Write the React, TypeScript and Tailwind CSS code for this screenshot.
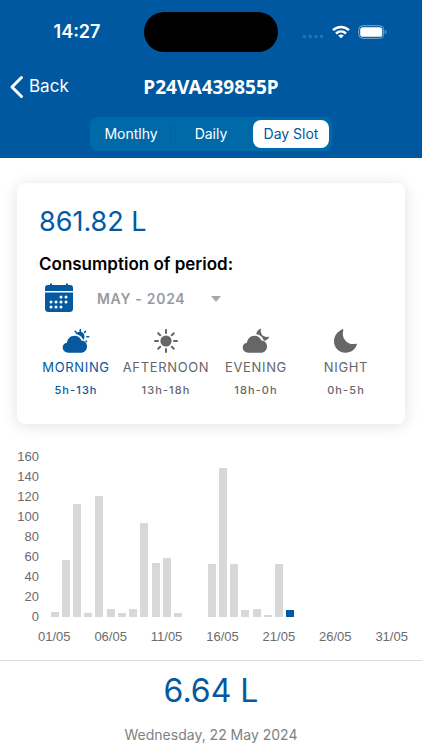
import { ReactNode, useState } from 'react';

const days = [
  5.5, 57, 113.5, 4.5, 121, 8.5, 4, 8.5, 94, 54.5, 59, 4, 0, 0, 53, 149.5, 53, 7,
  8.5, 2, 53, 6.64, 0, 0, 0, 0, 0, 0, 0, 0, 0,
];

const yTicks = [160, 140, 120, 100, 80, 60, 40, 20, 0];
const xTicks = ['01/05', '06/05', '11/05', '16/05', '21/05', '26/05', '31/05'];
const views = ['Montlhy', 'Daily', 'Day Slot'];

const cloud =
  'M6.300 25.700C2.900 25.700.7 23.400.7 20.600c0-2.600 1.700-4.500 4.200-4.900.6-4.200 3.700-7 7.500-7 3.300 0 5.900 1.900 7 4.900 3.300.2 5.600 2.600 5.600 5.800 0 3.600-2.600 6.300-6.200 6.300z';

function CloudSun() {
  return (
    <svg viewBox="0 0 28 28" className="size-7" aria-hidden="true">
      <path
        d="M13.600 6.900c2.200-3.400 7.500-2.800 8.700 1 .5 1.900.1 3.700-1 5-1.200-3.200-4-5.500-7.700-6z"
        fill="currentColor"
      />
      <path
        d="M18.300 2.500v1.900M13.200 4.300l.9 1M23.500 4.300l-.9 1M24.900 9.800h1.800M23.900 14.100l.6.500"
        stroke="currentColor"
        strokeWidth="1.600"
        strokeLinecap="round"
      />
      <path d={cloud} fill="currentColor" stroke="white" strokeWidth="1.400" paintOrder="stroke" />
    </svg>
  );
}

function Sun() {
  return (
    <svg viewBox="0 0 28 28" className="size-7" aria-hidden="true">
      <circle cx="14" cy="14" r="5.600" fill="currentColor" />
      <path
        d="M14 3v3M14 22v3M3 14h3M22 14h3M6.200 6.200l2 2M19.800 19.800l2 2M6.200 21.800l2-2M19.800 8.200l2-2"
        stroke="currentColor"
        strokeWidth="2"
        strokeLinecap="round"
      />
    </svg>
  );
}

function CloudMoon() {
  return (
    <svg viewBox="0 0 28 28" className="size-7" aria-hidden="true">
      <path
        d="M18.800 2.200c-.9 4.700 2.700 8.500 7.500 7.600.6-.1.900.2.600.8-.9 1.900-2.900 3.200-5.200 3.300-.5-3.700-4-6.600-7.500-6.700.3-2.400 1.900-4.600 4-5.500.5-.2.700 0 .6.500z"
        fill="currentColor"
      />
      <path d={cloud} fill="currentColor" stroke="white" strokeWidth="1.400" paintOrder="stroke" />
    </svg>
  );
}

function Moon() {
  return (
    <svg viewBox="0 0 28 28" className="size-7" aria-hidden="true">
      <path
        d="M10.700 2.200c.5-.2.900.1.700.7-1 3.200-.8 7.300 1.700 10.300 2.700 3.300 7 4.600 11 3.500.7-.2 1.100.2.800.9-1.600 5-6 8.200-11.300 8.200C7 25.800 2 20.900 2 14.300 2 8.800 5.500 4 10.700 2.200z"
        fill="currentColor"
      />
    </svg>
  );
}

const slots: { name: string; hours: string; icon: ReactNode }[] = [
  { name: 'MORNING', hours: '5h-13h', icon: <CloudSun /> },
  { name: 'AFTERNOON', hours: '13h-18h', icon: <Sun /> },
  { name: 'EVENING', hours: '18h-0h', icon: <CloudMoon /> },
  { name: 'NIGHT', hours: '0h-5h', icon: <Moon /> },
];

function CalendarIcon() {
  const dots = [
    [17, 14], [22, 14],
    [7, 19], [12, 19], [17, 19], [22, 19],
    [7, 24], [12, 24], [17, 24],
  ];
  return (
    <svg viewBox="0 0 30 30" className="size-[30px] text-[#0459a0]" fill="currentColor" aria-hidden="true">
      <path d="M1 8V5a3 3 0 0 1 3-3h2V1q1-1.400 2 0v1h14V1q1-1.400 2 0v1h2a3 3 0 0 1 3 3v3z" />
      <path d="M1 9.500h28v16a3.500 3.500 0 0 1-3.500 3.500h-21A3.500 3.500 0 0 1 1 25.500z" />
      {dots.map(([x, y]) => (
        <circle key={`${x}-${y}`} cx={x} cy={y} r="1.500" fill="white" />
      ))}
    </svg>
  );
}

function StatusBar() {
  return (
    <div className="grid grid-cols-[1fr_134px_1fr] items-center pt-3">
      <span className="pl-[10px] text-center text-lg font-semibold">14:27</span>
      <div className="h-10 rounded-full bg-black" />
      <div className="flex items-center pl-6">
        <svg viewBox="0 0 22 14" className="mr-2 h-[14px] w-[22px]" fill="#1a7ab5" aria-hidden="true">
          <circle cx="2.500" cy="11.500" r="1.800" />
          <circle cx="8.200" cy="11.500" r="1.800" />
          <circle cx="13.900" cy="11.500" r="1.800" />
          <circle cx="19.500" cy="11.500" r="1.800" />
        </svg>
        <svg viewBox="0 0 18 14" className="mr-2 h-[14px] w-[18px]" fill="none" stroke="white" strokeWidth="2.400" aria-hidden="true">
          <path d="M1 5.200c4.600-4.300 11.400-4.300 16 0M4 8.500c2.900-2.700 7.100-2.700 10 0" />
          <path d="M9 13.200 6.200 10.500c1.600-1.400 4-1.400 5.600 0z" fill="white" stroke="none" />
        </svg>
        <svg viewBox="0 0 30 14" className="h-[14px] w-[30px]" aria-hidden="true">
          <rect x=".7" y=".7" width="25" height="12.600" rx="4" fill="none" stroke="#78a9d0" />
          <rect x="2.200" y="2.200" width="22" height="9.600" rx="2.600" fill="white" />
          <path d="M27.200 5c1.700.6 1.700 3.400 0 4z" fill="#78a9d0" />
        </svg>
      </div>
    </div>
  );
}

export default function App() {
  const [view, setView] = useState('Day Slot');
  const [slot, setSlot] = useState('MORNING');

  return (
    <div className="min-h-screen bg-white font-['Inter',sans-serif]">
      <header className="bg-[#0059a0] pb-[7px] text-white">
        <StatusBar />

        <div className="grid h-[65px] grid-cols-[1fr_auto_1fr] items-center px-2 pt-[5px]">
          <button type="button" className="flex items-center gap-[5px] text-[17px]">
            <svg viewBox="0 0 16 24" className="h-6 w-4" fill="none" stroke="white" strokeWidth="3" strokeLinecap="round" strokeLinejoin="round" aria-hidden="true">
              <path d="M13.500 2.500 4 12l9.500 9.500" />
            </svg>
            Back
          </button>
          <h1 className="font-['Noto_Sans',sans-serif] text-[19px] leading-7 font-bold">P24VA439855P</h1>
        </div>

        <div className="mx-auto grid h-[34px] w-[242px] grid-cols-3 gap-1 rounded-lg bg-[#0069a8] p-[3px] text-sm">
          {views.map((name) => (
            <button
              key={name}
              type="button"
              aria-pressed={view === name}
              onClick={() => setView(name)}
              className={
                view === name
                  ? 'rounded-lg bg-white text-[#0059a0]'
                  : 'relative text-white after:absolute after:inset-y-1 after:-right-[2px] after:w-px first:after:bg-[#0061a4]'
              }
            >
              {name}
            </button>
          ))}
        </div>
      </header>

      <main>
        <section className="mx-[17px] mt-[25px] rounded-lg bg-white px-[22px] pt-[21px] pb-6 shadow-[0_2px_16px_rgba(0,0,0,0.12)]">
          <p className="text-[27px] leading-9 text-[#0459a0]">861.82 L</p>
          <h2 className="mt-3 text-[17px] leading-6 font-semibold text-black">Consumption of period:</h2>

          <div className="mt-[7px] flex items-center pl-[5px]">
            <CalendarIcon />
            <div className="relative ml-[23px]">
              <select
                aria-label="Month"
                className="w-32 appearance-none bg-transparent text-sm leading-6 font-semibold tracking-wider text-[#999a9f]"
              >
                <option>MAY - 2024</option>
              </select>
              <svg viewBox="0 0 10 6" className="pointer-events-none absolute top-[10px] right-1 h-[6px] w-[10px]" fill="#a9a9ac" aria-hidden="true">
                <path d="M0 0h10L5 6z" />
              </svg>
            </div>
          </div>

          <div className="-mx-2 mt-[14px] grid grid-cols-4">
            {slots.map(({ name, hours, icon }) => (
              <button
                key={name}
                type="button"
                aria-pressed={slot === name}
                onClick={() => setSlot(name)}
                className={`flex flex-col items-center ${slot === name ? 'text-[#0459a0]' : 'text-[#666668]'}`}
              >
                {icon}
                <span className="mt-[2px] text-[13px] leading-5 tracking-wider">{name}</span>
                <span className="mt-[3px] text-[11px] leading-5 font-medium tracking-widest">{hours}</span>
              </button>
            ))}
          </div>
        </section>

        <section className="mt-[23px] font-['Liberation_Sans',Arial,sans-serif] text-[13px] text-[#6b6b6d]" aria-label="Consumption chart">
          <div className="flex">
            <div className="flex w-[39px] flex-col text-right leading-5">
              {yTicks.map((tick) => (
                <span key={tick}>{tick}</span>
              ))}
            </div>
            <div className="my-[10px] mr-[25px] ml-[10px] flex flex-1 items-end">
              {days.map((value, i) => (
                <div key={i} className="flex h-full flex-1 items-end justify-center">
                  <div
                    className={`w-2 ${i === 21 ? 'bg-[#0459a0]' : 'bg-[#d7d8da]'}`}
                    style={{ height: `${value / 1.6}%` }}
                  />
                </div>
              ))}
            </div>
          </div>
          <div className="mr-[14px] ml-[38px] flex justify-between leading-5">
            {xTicks.map((tick) => (
              <span key={tick}>{tick}</span>
            ))}
          </div>
        </section>

        <footer className="mt-[13px] border-t border-[#dcdcde] pt-3 text-center">
          <p className="text-[32px] leading-9 text-[#0459a0]">6.64 L</p>
          <p className="mt-4 text-sm leading-5 text-[#808083]">Wednesday, 22 May 2024</p>
        </footer>
      </main>
    </div>
  );
}
